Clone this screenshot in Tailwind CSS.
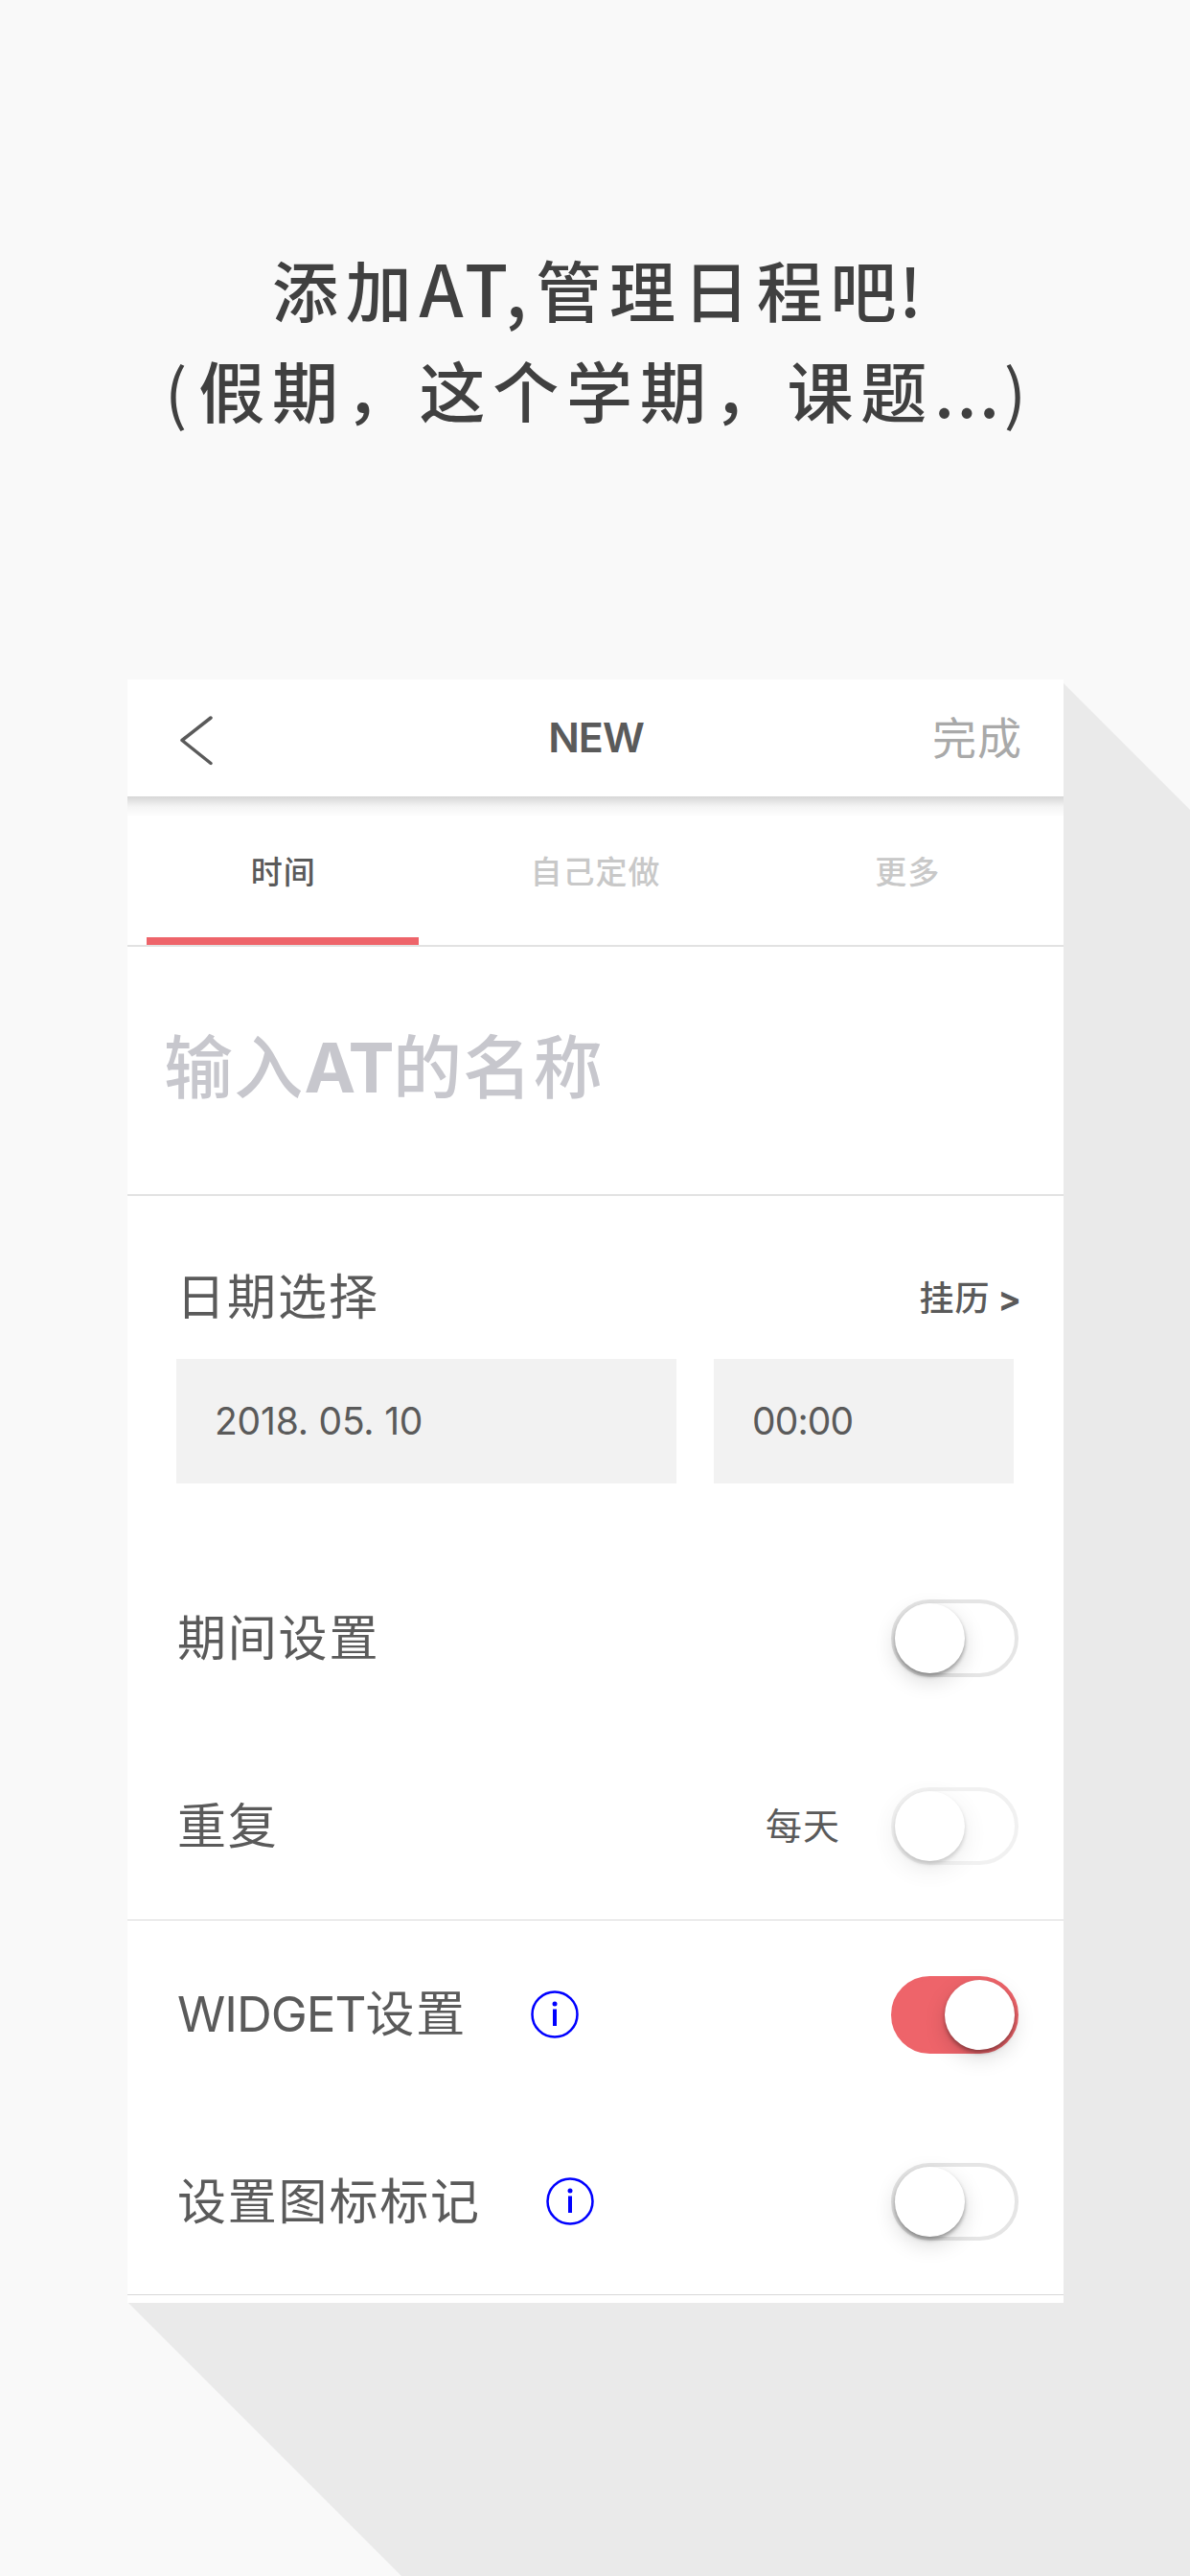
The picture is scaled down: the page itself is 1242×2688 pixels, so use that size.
<!DOCTYPE html>
<html lang="zh-CN">
<head>
  <meta charset="UTF-8">
  <meta name="viewport" content="width=device-width, initial-scale=1.0">
  <script src="https://cdn.jsdelivr.net/npm/@tailwindcss/browser@4"></script>
  <title>NEW</title>
</head>
<body class="bg-[#f9f9f9]">

<div class="relative w-[1242px] h-[2688px] overflow-hidden bg-[#f9f9f9] font-['Inter','Noto_Sans_CJK_SC',sans-serif] text-[#5a5a5a] whitespace-nowrap">

  <!-- Long shadow behind the card -->
  <svg class="absolute inset-0 w-full h-full" viewBox="0 0 1242 2688">
    <polygon points="1110,713 1242,845 1242,2688 419,2688 134,2403 1110,2403" fill="#eaeaea" />
  </svg>

  <!-- Headline -->
  <h1 class="relative h-[709px] pt-[246px] text-[69px] leading-[105px] tracking-[7.8px] font-medium text-[#404040] font-['Noto_Sans_CJK_SC',sans-serif]">
    <div class="pl-[284px]">添加<span class="mr-[3px] text-[74px] tracking-[6.5px]">AT,</span>管理日程吧<span class="-ml-[5px]">!</span></div>
    <div class="pl-[172px]"><span class="mr-[4px] font-normal">(</span>假期，这个学期，课题<span class="tracking-[3px]">...</span><span class="ml-[2px] font-normal">)</span></div>
  </h1>

  <!-- Card -->
  <main class="relative ml-[133px] w-[977px] h-[1694px] bg-white">

    <!-- Title bar -->
    <header class="relative z-10 flex items-center justify-between h-[122px] pl-[54px] pr-[43px] bg-white">
      <svg class="w-[36px] h-[54px] mt-[6px]" viewBox="0 0 36 54" fill="none" stroke="#5a5a5a" stroke-width="3.5" stroke-linecap="round" stroke-linejoin="round">
        <path d="M33 3L3 26.500L33 50.500" />
      </svg>
      <div class="ml-[48px] pb-[3px] text-[43px] leading-[60px] font-semibold tracking-[-1px]">NEW</div>
      <button class="text-[46px] leading-[60px] tracking-[1px] text-[#a9a9a9]">完成</button>
    </header>

    <!-- Tabs -->
    <div class="relative h-[157px] border-b-2 border-[#e2e2e2]">
      <div class="absolute top-0 inset-x-0 h-[22px] bg-linear-to-b from-black/16 via-black/4 to-transparent"></div>
      <nav class="grid grid-cols-3 pt-[54px] text-center text-[33px] leading-[50px] tracking-[1px] font-medium text-[#c8c8c8]">
        <a class="text-[#5a5a5a]">时间</a>
        <a>自己定做</a>
        <a>更多</a>
      </nav>
      <div class="absolute left-[20px] bottom-0 w-[284px] h-[8px] bg-[#ee646a]"></div>
    </div>

    <!-- Name -->
    <div class="h-[260px] pl-[38px] pt-[76px] border-b-2 border-[#e2e2e2] text-[72px] leading-[100px] font-medium tracking-[1.3px] text-[#c7c7cd]">输入<span class="font-bold tracking-[-1.5px]">AT</span>的名称</div>

    <!-- Date -->
    <section class="h-[363px] pl-[51px] pt-[76px] pr-[45px]">
      <div class="flex items-center justify-between h-[60px]">
        <div class="text-[51px] tracking-[2px]">日期选择</div>
        <div class="pt-[2px] -mr-[2px] text-[36px] font-medium tracking-[1px]">挂历<span class="ml-[8px] font-bold">&gt;</span></div>
      </div>
      <div class="flex gap-[39px] mt-[34px] text-[39px] leading-[130px]">
        <div class="w-[522px] h-[130px] pl-[40px] bg-[#f2f2f2] tracking-[-0.2px]">2018. 05. 10</div>
        <div class="w-[313px] h-[130px] pl-[40px] bg-[#f2f2f2] tracking-[-0.9px]">00:00</div>
      </div>
    </section>

    <!-- Options -->
    <section>
      <div class="flex items-center justify-between h-[196px] pl-[52px] pr-[47px]">
        <div class="pt-[2px] text-[51px] tracking-[1.8px]">期间设置</div>
        <div class="w-[133px] h-[81px] rounded-full border-4 border-[#e5e5e5]">
          <div class="size-[73px] rounded-full bg-white shadow-[0_8px_22px_rgba(0,0,0,0.15),0_3px_4px_rgba(0,0,0,0.35)]"></div>
        </div>
      </div>
      <div class="flex items-center h-[197px] pl-[52px] pr-[47px] border-b border-[#d8d8d8]">
        <div class="pt-[2px] text-[51px] tracking-[1.8px]">重复</div>
        <div class="ml-auto mr-[53px] text-[38px] tracking-[1px]">每天</div>
        <div class="w-[133px] h-[81px] rounded-full border-4 border-[#e5e5e5] opacity-50">
          <div class="size-[73px] rounded-full bg-white shadow-[0_8px_22px_rgba(0,0,0,0.15),0_3px_4px_rgba(0,0,0,0.35)]"></div>
        </div>
      </div>
      <div class="flex items-center h-[196px] pl-[52px] pr-[47px]">
        <div class="w-[369px] text-[51px] tracking-[1.8px]"><span class="tracking-[-1px]">WIDGET</span>设置</div>
        <svg class="size-[50px]" viewBox="0 0 50 50">
          <circle cx="25" cy="25" r="23.500" fill="none" stroke="#0000ff" stroke-width="2.500" />
          <circle cx="25" cy="14" r="2.500" fill="#0000ff" />
          <rect x="23" y="19.500" width="4" height="17.500" fill="#0000ff" />
        </svg>
        <div class="flex justify-end ml-auto w-[133px] h-[81px] rounded-full border-4 border-[#ee646a] bg-[#ee646a]">
          <div class="size-[73px] rounded-full bg-white shadow-[0_8px_22px_rgba(0,0,0,0.15),0_3px_4px_rgba(0,0,0,0.35)]"></div>
        </div>
      </div>
      <div class="flex items-center h-[195px] pl-[52px] pr-[47px] border-b border-[#d8d8d8]">
        <div class="w-[385px] pt-[2px] text-[51px] tracking-[1.8px]">设置图标标记</div>
        <svg class="size-[50px]" viewBox="0 0 50 50">
          <circle cx="25" cy="25" r="23.500" fill="none" stroke="#0000ff" stroke-width="2.500" />
          <circle cx="25" cy="14" r="2.500" fill="#0000ff" />
          <rect x="23" y="19.500" width="4" height="17.500" fill="#0000ff" />
        </svg>
        <div class="ml-auto w-[133px] h-[81px] rounded-full border-4 border-[#e5e5e5]">
          <div class="size-[73px] rounded-full bg-white shadow-[0_8px_22px_rgba(0,0,0,0.15),0_3px_4px_rgba(0,0,0,0.35)]"></div>
        </div>
      </div>
    </section>
  </main>
</div>

</body>
</html>
